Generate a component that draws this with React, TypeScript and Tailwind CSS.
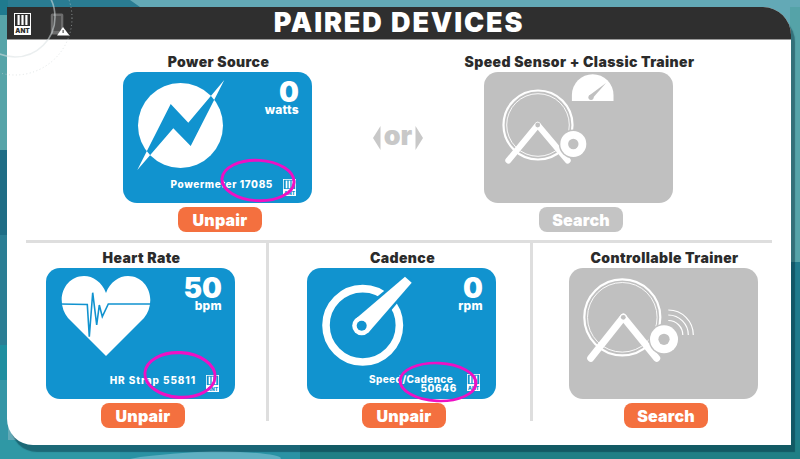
const font = "font-['Inter','Liberation_Sans',sans-serif]";

function AntIcon({ fg, className }: { fg: string; className: string }) {
  return (
    <svg viewBox="0 0 17 22" className={className}>
      <rect x="0.5" y="0.5" width="16" height="21" fill="none" stroke="#fff" strokeWidth="1" />
      <rect x="3.5" y="2" width="2.2" height="10" fill="#fff" />
      <rect x="7.4" y="2" width="2.2" height="10" fill="#fff" />
      <rect x="11.3" y="2" width="2.2" height="10" fill="#fff" />
      <rect x="0" y="13" width="17" height="9" fill="#fff" />
      <text x="8.5" y="20.2" textAnchor="middle" fontSize="6.4" fontWeight="900" fontFamily="Inter" fill={fg}>ANT</text>
    </svg>
  );
}

function PowerIcon() {
  const bolt = "101.3,8 67.7,74 50.3,56.3 14.3,98 47.7,32 65.3,50.7";
  return (
    <svg viewBox="0 0 189 131" className="absolute inset-0 w-full h-full">
      <defs>
        <clipPath id="pc"><circle cx="57.5" cy="53.5" r="42.5" /></clipPath>
      </defs>
      <polygon points={bolt} fill="#fff" />
      <circle cx="57.5" cy="53.5" r="42.5" fill="#fff" />
      <polygon points={bolt} fill="#1193cf" clipPath="url(#pc)" />
    </svg>
  );
}

function HeartIcon() {
  return (
    <svg viewBox="0 0 189 131" className="absolute inset-0 w-full h-full">
      <path d="M60 88 L22 50 Q15.7 42 15.7 32 C15.7 19 25 8 38 8 C47 8 56 14 60 25 C64 14 73 8 82 8 C95 8 104.3 19 104.3 32 Q104.3 42 98 50 Z" fill="#fff" />
      <polyline points="14,36 41.3,36.5 43.3,68.7 46.7,24.7 50.7,57 53.3,37 56.3,48.7 62.3,36 106,36" fill="none" stroke="#1193cf" strokeWidth="1.6" />
    </svg>
  );
}

function CadenceIcon() {
  return (
    <svg viewBox="0 0 189 131" className="absolute inset-0 w-full h-full">
      <circle cx="55.7" cy="57.3" r="36.7" fill="none" stroke="#fff" strokeWidth="7.6" />
      <polygon points="98,8.7 104.7,14.7 62,66 47,50" fill="#1193cf" stroke="#1193cf" strokeWidth="4" />
      <polygon points="98,8.7 104.7,14.7 61.5,64.5 48.5,51" fill="#fff" />
      <circle cx="54.7" cy="57.7" r="9.5" fill="#fff" />
      <circle cx="54.7" cy="57.7" r="5" fill="#1193cf" />
    </svg>
  );
}

function Trainer({ cx, cy, r, ax, ay, lx, rx, ey, fx, fy, fr, sw, children }: {
  cx: number; cy: number; r: number; ax: number; ay: number; lx: number; rx: number; ey: number;
  fx: number; fy: number; fr: number; sw: number; children?: React.ReactNode;
}) {
  return (
    <svg viewBox="0 0 189 131" className="absolute inset-0 w-full h-full">
      <circle cx={cx} cy={cy} r={r} fill="none" stroke="#fff" strokeWidth="2.2" />
      <circle cx={cx} cy={cy} r={r - 3.2} fill="none" stroke="#fff" strokeWidth="0.9" />
      <line x1={ax} y1={ay} x2={lx} y2={ey} stroke="#fff" strokeWidth={sw} strokeLinecap="round" />
      <line x1={ax} y1={ay} x2={rx} y2={ey} stroke="#fff" strokeWidth={sw} strokeLinecap="round" />
      <circle cx={ax} cy={ay} r="2.4" fill="#c0c0c0" />
      <circle cx={fx} cy={fy} r={fr + 1.5} fill="#c0c0c0" />
      <circle cx={fx} cy={fy} r={fr} fill="#fff" />
      <circle cx={fx} cy={fy} r={fr * 0.4} fill="#c0c0c0" />
      {children}
    </svg>
  );
}

function SpeedIcon() {
  return (
    <Trainer cx={54} cy={53} r={34.5} ax={53.7} ay={53} lx={24.3} rx={83.7} ey={88.5} fx={89.3} fy={72} fr={13} sw={6}>
      <path d="M87.9 23 A20.8 20.8 0 0 1 129.5 23 V29 H87.9 Z" fill="#fff" />
      <polygon points="105.2,23.5 107.5,27.5 122,11" fill="#c0c0c0" />
      <circle cx="107" cy="25.3" r="2.6" fill="#c0c0c0" />
    </Trainer>
  );
}

function ControlIcon() {
  return (
    <Trainer cx={53.3} cy={49.3} r={38} ax={54.3} ay={49.3} lx={21.7} rx={87.7} ey={90.3} fx={95} fy={71.3} fr={14} sw={7}>
      <g fill="none" stroke="#fff" strokeWidth="1.2">
        <path d="M99.3 42 A25 25 0 0 1 124.3 67" />
        <path d="M99.3 47 A20 20 0 0 1 119.3 67" />
        <path d="M99.3 52.5 A14.5 14.5 0 0 1 113.8 67" />
      </g>
    </Trainer>
  );
}

function Ellipse({ className }: { className: string }) {
  return (
    <svg viewBox="0 0 80 50" preserveAspectRatio="none" className={`absolute ${className}`}>
      <ellipse cx="40" cy="25" rx="37" ry="21.5" fill="none" stroke="#ee10c4" strokeWidth="3" transform="rotate(3 40 25)" />
    </svg>
  );
}

function Device({ label, active, value, unit, name, action, icon, ring, muted }: {
  label: string; active?: boolean; value?: string; unit?: string; name?: React.ReactNode;
  action: string; icon: React.ReactNode; ring?: React.ReactNode; muted?: boolean;
}) {
  return (
    <div className="flex flex-col items-center w-[189px]">
      <div className="h-[16px] mb-[2px] ml-[2px] leading-[16px] text-[14px] font-black text-[#2b2b2b] whitespace-nowrap tracking-[0.4px]">{label}</div>
      <div className={`relative w-[189px] h-[131px] rounded-[14px] flex flex-col justify-between ${active ? "bg-[#1193cf]" : "bg-[#c0c0c0]"}`}>
        {icon}
        {active && (
          <>
            <div className="relative flex flex-col items-end pt-[9px] pr-[13px] text-white">
              <div className="text-[28px] font-black leading-[23px]">{value}</div>
              <div className="text-[12px] font-extrabold leading-[12px] tracking-[0.3px]">{unit}</div>
            </div>
            <div className="relative flex items-start justify-end gap-[10px] pr-[16px] pb-[6px] text-white">
              <div className="text-[10px] font-extrabold text-right leading-[9px] pt-[2px] tracking-[0.6px] whitespace-nowrap">{name}</div>
              <AntIcon fg="#1193cf" className="w-[13px] h-[19px] shrink-0" />
            </div>
          </>
        )}
        {ring}
      </div>
      <div className={`mt-[4px] ml-[5px] w-[84px] h-[25px] rounded-[8px] flex items-center justify-center text-white text-[16px] font-black tracking-[0.2px] ${muted ? "bg-[#c4c4c4]" : "bg-[#f4703f]"}`}>
        {action}
      </div>
    </div>
  );
}

function Chevron({ flip }: { flip?: boolean }) {
  return (
    <svg viewBox="0 0 8 24" className={`w-[8px] h-[24px] ${flip ? "-scale-x-100" : ""}`}>
      <polygon points="7.5,0 7.5,24 0,12" fill="#c8c8c8" />
    </svg>
  );
}

export default function App() {
  return (
    <div className={`relative w-[800px] h-[459px] overflow-hidden bg-[#63a9b6] ${font}`}>
      <svg viewBox="0 0 800 459" className="absolute inset-0 w-full h-full">
        <polygon points="0,0 130,0 140,7 0,7" fill="#2a7c92" />
        <rect x="0" y="0" width="8" height="15" fill="#1f7a8e" />
        <rect x="0" y="15" width="8" height="135" fill="#57a4a8" />
        <rect x="0" y="150" width="8" height="85" fill="#1f6d85" />
        <rect x="0" y="235" width="8" height="110" fill="#2b7e94" />
        <rect x="0" y="345" width="8" height="35" fill="#1f8fa0" />
        <rect x="0" y="380" width="8" height="79" fill="#3596a6" />
        <rect x="790" y="7" width="10" height="255" fill="#55a3a8" />
        <rect x="790" y="262" width="10" height="197" fill="#1f7a8c" />
        <rect x="0" y="440" width="120" height="19" fill="#2f98a5" />
        <rect x="120" y="440" width="180" height="19" fill="#2a92a4" />
        <rect x="300" y="440" width="500" height="19" fill="#1f7f85" />
        <path d="M140 457 C180 453 210 450 240 452 C270 453 285 457 280 459 L130 459 Z" fill="#5fb0c2" />
      </svg>

      <div className="relative ml-[7px] mt-[7px] w-[784px] h-[438px] bg-white rounded-tr-[28px] rounded-bl-[26px] shadow-[4px_7px_1px_rgba(0,35,50,0.4)] flex flex-col">
        <div className="h-[33px] shrink-0 bg-[#2f2f2f] rounded-tr-[28px] border-b border-[#9a9a9a] flex items-center justify-center">
          <div className="text-white text-[27px] font-black tracking-[1.9px] leading-[32px]">PAIRED DEVICES</div>
        </div>

        <div className="h-[200px] shrink-0 pt-[14px] pl-[116px] flex items-start">
          <Device
            label="Power Source"
            active
            value="0"
            unit="watts"
            name="Powermeter 17085"
            action="Unpair"
            icon={<PowerIcon />}
            ring={<Ellipse className="left-[96px] top-[85px] w-[78px] h-[47px]" />}
          />
          <div className="w-[172px] h-[131px] mt-[18px] flex items-center justify-center gap-[3px]">
            <Chevron />
            <div className="text-[27px] font-black text-[#c8c8c8] leading-[26px] mb-[3px]">or</div>
            <Chevron flip />
          </div>
          <Device label="Speed Sensor + Classic Trainer" action="Search" icon={<SpeedIcon />} muted />
        </div>

        <div className="h-[3px] shrink-0 mx-[19px] bg-[#dedede]" />

        <div className="flex items-start">
          <div className="w-[259px] shrink-0 pt-[7px] pl-[39px]">
            <Device
              label="Heart Rate"
              active
              value="50"
              unit="bpm"
              name={<span className="tracking-[0.9px]">HR Strap 55811</span>}
              action="Unpair"
              icon={<HeartIcon />}
              ring={<Ellipse className="left-[96px] top-[81px] w-[76px] h-[52px]" />}
            />
          </div>
          <div className="w-[3px] h-[178px] shrink-0 bg-[#dedede]" />
          <div className="w-[261px] shrink-0 pt-[7px] pl-[38px]">
            <Device
              label="Cadence"
              active
              value="0"
              unit="rpm"
              name={<><div className="pr-[4px] tracking-[0.35px]">Speed/Cadence</div><div>50646</div></>}
              action="Unpair"
              icon={<CadenceIcon />}
              ring={<Ellipse className="left-[90px] top-[92px] w-[82px] h-[44px]" />}
            />
          </div>
          <div className="w-[3px] h-[178px] shrink-0 bg-[#dedede]" />
          <div className="w-[258px] shrink-0 pt-[7px] pl-[36px]">
            <Device label="Controllable Trainer" action="Search" icon={<ControlIcon />} />
          </div>
        </div>
      </div>

      <div className="absolute left-[14px] top-[13px] w-[17px] h-[22px]">
        <AntIcon fg="#2f2f2f" className="w-[17px] h-[22px]" />
      </div>
      <svg viewBox="0 0 20 24" className="absolute left-[50px] top-[12px] w-[20px] h-[24px]">
        <rect x="0.8" y="1.5" width="12.5" height="21" rx="1.5" fill="#6d6d6d" />
        <rect x="3" y="4" width="8" height="15" fill="#4d4d4d" />
        <polygon points="13,15 19.5,23.5 7,23.5" fill="#fff" />
        <rect x="12.6" y="18" width="1" height="3" fill="#2f2f2f" />
      </svg>
      <svg viewBox="0 0 800 459" className="absolute inset-0 w-full h-full pointer-events-none">
        <circle cx="15" cy="17" r="40" fill="none" stroke="#d8e0e2" strokeOpacity="0.55" strokeWidth="1.6" />
        <circle cx="15" cy="18" r="57" fill="none" stroke="#c9d2d4" strokeOpacity="0.6" strokeWidth="1" strokeDasharray="1 2.5" />
      </svg>
    </div>
  );
}
